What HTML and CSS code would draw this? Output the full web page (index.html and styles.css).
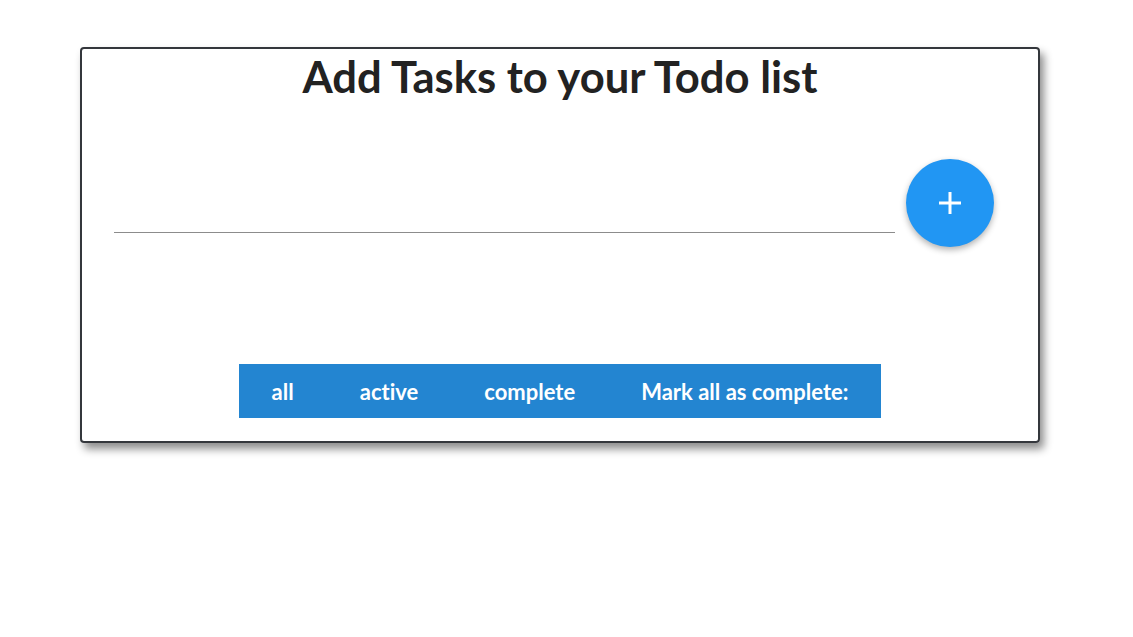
FILE: index.html
```html
<!DOCTYPE html>
<html lang="en">
<head>
<meta charset="utf-8">
<title>Todo</title>
<link rel="stylesheet" href="styles.css">
</head>
<body>
<div class="card">
  <h1 class="title">Add Tasks to your Todo list</h1>
  <div class="add-row">
    <input class="task-input" type="text" aria-label="New task">
    <button class="fab" type="button" aria-label="Add task">
      <svg width="24" height="24" viewBox="0 0 24 24"><path d="M12 1v22M1 12h22" stroke="#fff" stroke-width="3"/></svg>
    </button>
  </div>
  <nav class="filters">
    <a class="filter">all</a>
    <a class="filter">active</a>
    <a class="filter">complete</a>
    <a class="filter">Mark all as complete:</a>
  </nav>
</div>
</body>
</html>
```
FILE: styles.css
```css
html, body {
  margin: 0;
  padding: 0;
  background: #fff;
}
body {
  font-family: Lato, "Noto Sans", sans-serif;
  font-variant-ligatures: none;
  padding-top: 47px;
  padding-bottom: 60px;
}
.card {
  width: 960px;
  box-sizing: border-box;
  margin-left: 80px;
  border: 2px solid #34373c;
  border-radius: 4px;
  box-shadow: 4px 6px 8px rgba(0, 0, 0, 0.45);
  padding-bottom: 23px;
  display: flex;
  flex-direction: column;
}
.title {
  margin: 0;
  text-align: center;
  font-size: 43.6px;
  font-weight: 700;
  line-height: 54px;
  color: #222;
}
.add-row {
  display: flex;
  align-items: center;
  margin-top: 56px;
  padding-left: 32px;
  padding-right: 44px;
  gap: 11px;
}
.task-input {
  flex: 1;
  height: 60px;
  box-sizing: border-box;
  border: none;
  border-bottom: 1px solid #8c8c8c;
  outline: none;
  background: transparent;
  font-family: inherit;
  font-size: 20px;
}
.fab {
  width: 88px;
  height: 88px;
  border-radius: 50%;
  border: none;
  background: #2196f3;
  box-shadow: 0 3px 6px rgba(0, 0, 0, 0.3);
  display: flex;
  align-items: center;
  justify-content: center;
  padding: 0;
}
.filters {
  align-self: center;
  display: flex;
  margin-top: 117px;
  background: #2385d1;
  height: 54px;
  align-items: center;
}
.filter {
  color: #fff;
  font-weight: 700;
  font-size: 22px;
  padding: 0 33px;
}
```
